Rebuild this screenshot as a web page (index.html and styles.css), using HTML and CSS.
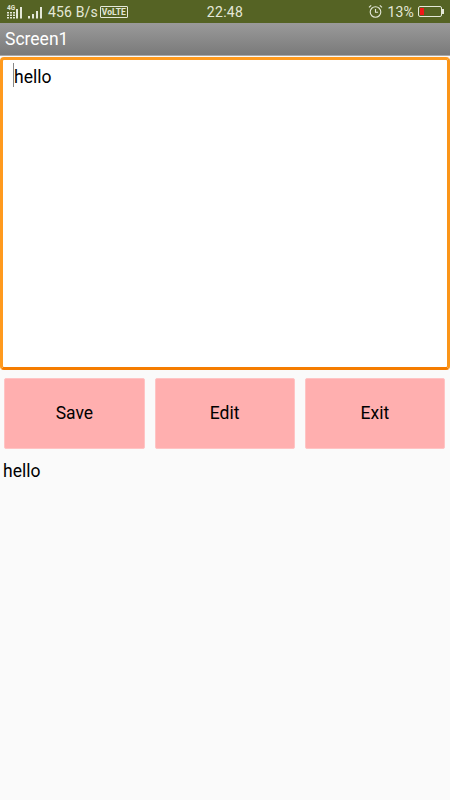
FILE: index.html
```html
<!DOCTYPE html>
<html lang="en">
<head>
<meta charset="utf-8">
<title>Screen1</title>
<link rel="stylesheet" href="styles.css">
</head>
<body>
<div class="status">
  <div class="status-left">
    <svg class="sig" width="40" height="16" viewBox="0 2 40 16">
      <text x="1" y="8" class="tiny">4G</text>
      <g fill="#e4e8d8">
        <rect x="1" y="10" width="2" height="1.5"/><rect x="1" y="12.5" width="2" height="1.5"/><rect x="1" y="15" width="2" height="1.5"/>
        <rect x="4" y="10" width="2" height="1.5"/><rect x="4" y="12.5" width="2" height="1.5"/><rect x="4" y="15" width="2" height="1.5"/>
        <rect x="7" y="10" width="2" height="1.5"/><rect x="7" y="12.5" width="2" height="1.5"/><rect x="7" y="15" width="2" height="1.5"/>
        <rect x="10" y="7" width="2" height="9.5"/>
        <rect x="14" y="5" width="2" height="11.5"/>
        <rect x="22" y="14" width="2" height="2.5"/><rect x="26" y="12" width="2" height="4.5"/><rect x="30" y="9" width="2" height="7.5"/><rect x="34" y="5" width="2" height="11.5"/>
      </g>
    </svg>
    <span class="speed">456 B/s</span>
    <span class="volte">VoLTE</span>
  </div>
  <span class="clock">22:48</span>
  <div class="status-right">
    <svg width="15" height="15" viewBox="0 0 15 15" fill="none" stroke="#e4e8d8" stroke-width="1.1">
      <circle cx="7.5" cy="8" r="5.3"/>
      <path d="M7.5 5v3.3h2.6M1 3.4 3.2 1.3M14 3.4 11.8 1.3"/>
    </svg>
    <span class="pct">13%</span>
    <div class="battery"><div class="battery-level"></div></div>
  </div>
</div>
<div class="titlebar">Screen1</div>
<main class="content">
  <div class="input"><span class="caret"></span>hello</div>
  <div class="buttons">
    <button class="btn">Save</button>
    <button class="btn">Edit</button>
    <button class="btn">Exit</button>
  </div>
  <div class="label">hello</div>
</main>
</body>
</html>
```
FILE: styles.css
```css
* { box-sizing: border-box; }
html, body { margin: 0; height: 100%; }
body {
  width: 450px;
  height: 800px;
  overflow: hidden;
  background: #fafafa;
  font-family: Roboto, "Liberation Sans", sans-serif;
  color: #000;
  display: flex;
  flex-direction: column;
}
.status {
  height: 23px;
  flex: none;
  background: #556324;
  color: #e4e8d8;
  display: grid;
  grid-template-columns: 1fr auto 1fr;
  align-items: center;
  padding: 0 6px 0 6px;
  font-size: 14px;
}
.status-left, .status-right { display: flex; align-items: center; }
.status-right { justify-content: flex-end; }
.sig { display: block; margin-right: 2px; }
.tiny { font-size: 6.5px; fill: #e4e8d8; font-family: Roboto, sans-serif; font-weight: 700; }
.speed { letter-spacing: 0.15px; }
.volte {
  font-size: 8.5px;
  font-weight: 700;
  border: 1px solid #e4e8d8;
  border-radius: 1px;
  padding: 0 1px;
  margin-left: 2px;
  line-height: 10px;
}
.clock { font-size: 14px; letter-spacing: 0.3px; }
.pct { margin-left: 4px; letter-spacing: 0.2px; }
.battery {
  width: 24px;
  height: 11px;
  border: 1px solid #e4e8d8;
  border-radius: 2px;
  margin-left: 4px;
  margin-right: 2px;
  padding: 1px 0 1px 1px;
  position: relative;
}
.battery::after {
  content: "";
  position: absolute;
  right: -3px;
  top: 2px;
  width: 2px;
  height: 5px;
  background: #e4e8d8;
}
.battery-level { width: 4px; height: 100%; background: #f01818; }
.titlebar {
  height: 33px;
  flex: none;
  background: linear-gradient(#9a9a9a, #7a7a7a);
  border-bottom: 1px solid #a8a8a8;
  color: #fff;
  font-size: 17.5px;
  line-height: 33px;
  padding-left: 5px;
}
.content { flex: 1; display: flex; flex-direction: column; }
.input {
  height: 313px;
  margin-top: 1px;
  background: #fff;
  border: 3px solid;
  border-color: #ff9a1e #fb9518 #f57c00 #ff9a1e;
  border-radius: 4px;
  padding: 5px 0 0 11px;
  font-size: 17.5px;
  line-height: 24px;
  position: relative;
}
.caret {
  position: absolute;
  left: 10px;
  top: 3px;
  width: 1px;
  height: 24px;
  background: #888;
}
.buttons {
  display: flex;
  gap: 10px;
  padding: 8px 5px 0 4.3px;
}
.btn {
  flex: 1;
  height: 71px;
  border: 1px solid #ffc4c4;
  border-radius: 2px;
  background: #ffafaf;
  font-family: inherit;
  font-size: 17.5px;
  color: #000;
  padding: 0 0 2px;
}
.label {
  font-size: 17.5px;
  line-height: 24px;
  padding: 10px 0 0 3px;
}
```
